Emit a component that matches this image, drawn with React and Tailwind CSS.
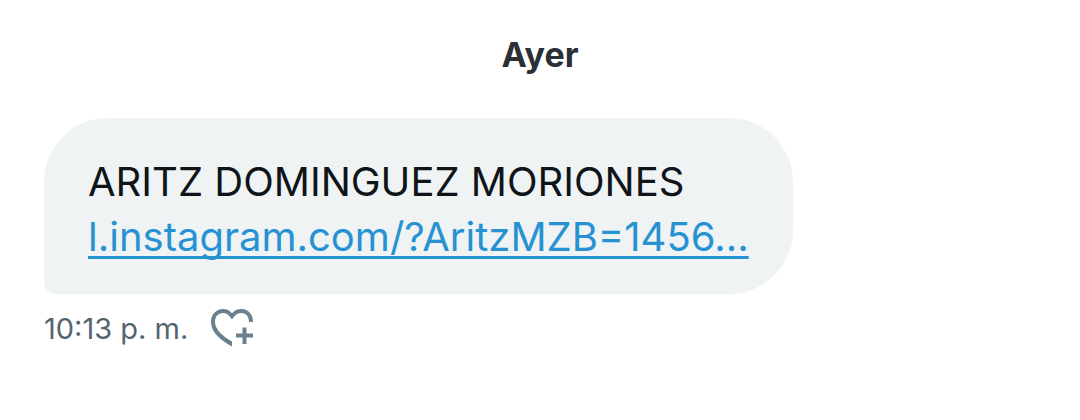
export default function App() {
  return (
    <main className="min-h-screen bg-white px-11 pt-8 font-['Inter','Liberation_Sans',sans-serif]">
      <h2 className="text-center text-[34px] leading-[46px] font-bold text-[#2b2f36]">Ayer</h2>
      <article className="mt-10 flex flex-col items-start">
        <div className="max-w-full rounded-[64px] rounded-bl-xl bg-[#eff3f4] px-11 pt-9 pb-[30px] text-[40px] leading-[55px] text-[#0f1419]">
          <p>ARITZ DOMINGUEZ MORIONES</p>
          <a
            href="#instagram"
            className="block text-[#2792d2] underline decoration-[3px] underline-offset-[5px] [text-decoration-skip-ink:none]"
          >
            l.instagram.com/?AritzMZB=1456...
          </a>
        </div>
        <footer className="mt-3 flex items-center gap-[22px] text-[29px] leading-[46px] text-[#536471]">
          <time>10:13 p. m.</time>
          <button type="button" aria-label="Reaccionar" className="cursor-pointer">
            <svg viewBox="0 0 46 42" className="h-[42px] w-[46px]" fill="#6b7f8d">
              <path d="M22 38.5C10 32 1 24 1 14C1 6.5 6 1 13 1C16.5 1 20 2.5 22 5.2C24 2.5 27.500 1 31.500 1C38.500 1 43 6.500 43 14H39C39 8.500 36 5 31.500 5C27.500 5 25 7 22 11.500C19 7 16.500 5 13 5C8 5 5 8.500 5 14C5 21.500 13 28.500 22 33.500Z" />
              <path d="M32.500 19.500H36.500V25.500H43V29.500H36.500V36H32.500V29.500H26V25.500H32.500Z" />
            </svg>
          </button>
        </footer>
      </article>
    </main>
  );
}
